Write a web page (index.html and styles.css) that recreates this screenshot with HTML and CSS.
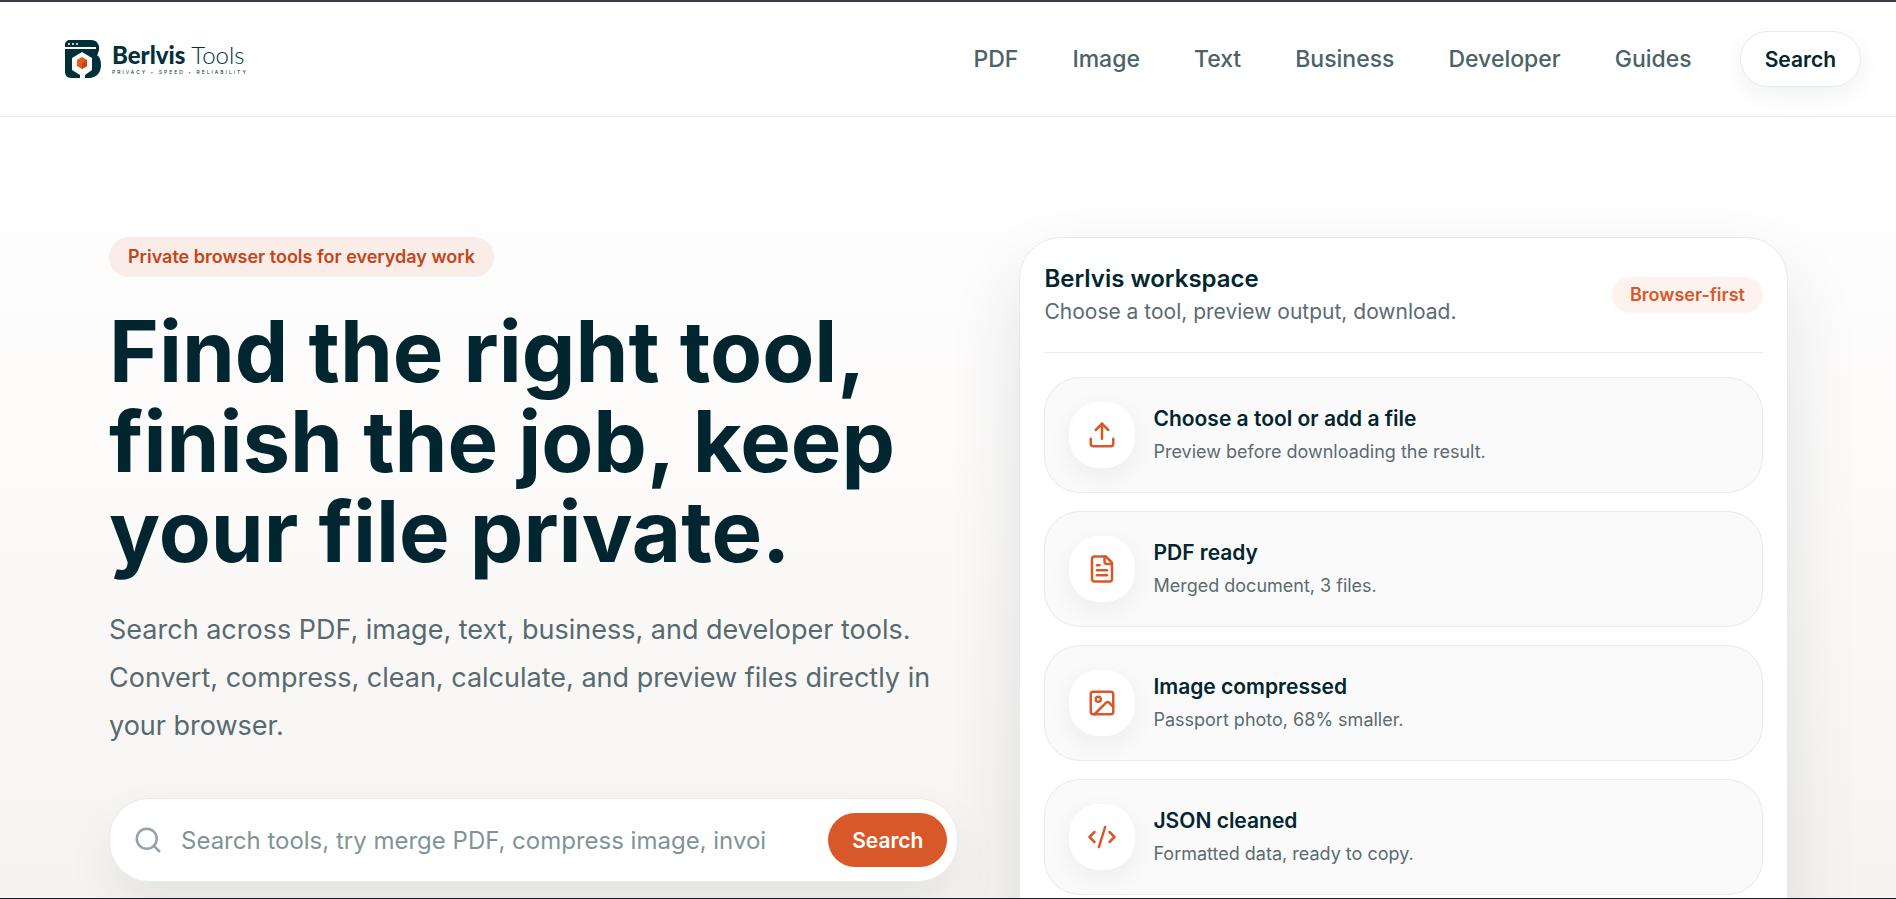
FILE: index.html
```html
<!DOCTYPE html>
<html lang="en">
<head>
    <meta charset="UTF-8">
    <meta name="viewport" content="width=device-width, initial-scale=1.0">
    <title>Berlvis Tools</title>
    <link rel="stylesheet" href="styles.css">
</head>
<body>
    <header class="site-header">
        <a class="logo" href="#" aria-label="Berlvis Tools">
            <svg class="logo-mark" viewBox="0 0 36 38" aria-hidden="true">
                <path fill="#02303a" d="M5 0h21c6 0 9 5 8 10-1 3-1 4-2 5 3 2 4 6 4 10 0 8-5 13-12 13h-4v-3l7-5V18L17 12 7 18v12l8 5v3H6c-4 0-6-3-6-6V5c0-3 2-5 5-5z"/>
                <path fill="#fff" d="M0 7h31v2H0z"/>
                <circle cx="4" cy="4" r="1" fill="#fff"/>
                <circle cx="8" cy="4" r="1" fill="#fff"/>
                <circle cx="12" cy="4" r="1" fill="#fff"/>
                <path fill="#e8591f" d="M17 17l5 3v6l-5 3-5-3v-6z"/>
                <path fill="#c8430f" d="M17 23l5-3v6l-5 3z"/>
            </svg>
            <span class="logo-text">
                <span class="logo-name"><b>Berlvis</b> Tools</span>
                <span class="logo-tagline">PRIVACY <i>•</i> SPEED <i>•</i> RELIABILITY</span>
            </span>
        </a>
        <nav class="nav">
            <a href="#">PDF</a>
            <a href="#">Image</a>
            <a href="#">Text</a>
            <a href="#">Business</a>
            <a href="#">Developer</a>
            <a href="#">Guides</a>
        </nav>
        <button class="nav-search" type="button">Search</button>
    </header>

    <main class="hero">
        <section class="intro">
            <span class="badge">Private browser tools for everyday work</span>
            <h1>Find the right tool, finish the job, keep your file private.</h1>
            <p class="lead">Search across PDF, image, text, business, and developer tools. Convert, compress, clean, calculate, and preview files directly in your browser.</p>
            <form class="search">
                <svg class="search-icon" viewBox="0 0 24 24" aria-hidden="true"><circle cx="11" cy="11" r="8"/><path d="m21 21-4.3-4.3"/></svg>
                <input type="search" aria-label="Search tools" placeholder="Search tools, try merge PDF, compress image, invoi">
                <button type="submit">Search</button>
            </form>
        </section>

        <section class="workspace">
            <div class="workspace-head">
                <div>
                    <h2>Berlvis workspace</h2>
                    <p>Choose a tool, preview output, download.</p>
                </div>
                <span class="tag">Browser-first</span>
            </div>
            <ul class="steps">
                <li class="step">
                    <span class="step-icon">
                        <svg viewBox="0 0 24 24" aria-hidden="true"><path d="M12 15V3"/><path d="m7 8 5-5 5 5"/><path d="M21 15v4a2 2 0 0 1-2 2H5a2 2 0 0 1-2-2v-4"/></svg>
                    </span>
                    <div>
                        <h3>Choose a tool or add a file</h3>
                        <p>Preview before downloading the result.</p>
                    </div>
                </li>
                <li class="step">
                    <span class="step-icon">
                        <svg viewBox="0 0 24 24" aria-hidden="true"><path d="M15 2H6a2 2 0 0 0-2 2v16a2 2 0 0 0 2 2h12a2 2 0 0 0 2-2V7Z"/><path d="M14 2v4a2 2 0 0 0 2 2h4"/><path d="M10 9H8"/><path d="M16 13H8"/><path d="M16 17H8"/></svg>
                    </span>
                    <div>
                        <h3>PDF ready</h3>
                        <p>Merged document, 3 files.</p>
                    </div>
                </li>
                <li class="step">
                    <span class="step-icon">
                        <svg viewBox="0 0 24 24" aria-hidden="true"><rect x="3" y="3" width="18" height="18" rx="2"/><circle cx="9" cy="9" r="2"/><path d="m21 15-3.1-3.1a2 2 0 0 0-2.8 0L6 21"/></svg>
                    </span>
                    <div>
                        <h3>Image compressed</h3>
                        <p>Passport photo, 68% smaller.</p>
                    </div>
                </li>
                <li class="step">
                    <span class="step-icon">
                        <svg viewBox="0 0 24 24" aria-hidden="true"><path d="m18 16 4-4-4-4"/><path d="m6 8-4 4 4 4"/><path d="m14.5 4-5 16"/></svg>
                    </span>
                    <div>
                        <h3>JSON cleaned</h3>
                        <p>Formatted data, ready to copy.</p>
                    </div>
                </li>
            </ul>
        </section>
    </main>
</body>
</html>
```
FILE: styles.css
```css
* {
    box-sizing: border-box;
}
body {
    margin: 0;
    height: 100vh;
    overflow: hidden;
    display: flex;
    flex-direction: column;
    border-top: 2px solid #3b3c47;
    border-bottom: 1px solid #1c1c1e;
    background-color: white;
    color: #02262f;
    font-family: Inter, "Liberation Sans", sans-serif;
}
h1, h2, h3, p, ul {
    margin: 0;
    padding: 0;
}
button, input {
    font-family: inherit;
}

/* Header */
.site-header {
    flex: none;
    display: flex;
    align-items: center;
    gap: 48px;
    height: 115px;
    padding: 0 35px 0 65px;
    border-bottom: 1px solid #e6ecec;
    background-color: white;
}
.logo {
    display: flex;
    align-items: center;
    gap: 11px;
    margin-right: auto;
    color: #02303a;
    text-decoration: none;
}
.logo-mark {
    width: 36px;
    height: 38px;
}
.logo-text {
    display: flex;
    flex-direction: column;
    gap: 2px;
}
.logo-name {
    font-family: Lato, sans-serif;
    font-size: 24px;
    font-weight: 300;
    line-height: 24px;
}
.logo-name b {
    font-weight: 900;
}
.logo-tagline {
    font-size: 5px;
    line-height: 6px;
    letter-spacing: 2px;
}
.logo-tagline i {
    color: #e0521e;
}
.nav {
    display: flex;
    align-items: center;
    gap: 54px;
}
.nav a {
    color: #4b6268;
    font-size: 23px;
    font-weight: 500;
    text-decoration: none;
}
.nav-search {
    height: 56px;
    padding: 0 24px;
    border: 1px solid #e6ecec;
    border-radius: 28px;
    background-color: white;
    box-shadow: 0 8px 24px rgba(2, 38, 47, 0.06);
    color: #02262f;
    font-size: 21px;
    font-weight: 600;
}

/* Hero */
.hero {
    flex: 1;
    min-height: 0;
    display: grid;
    grid-template-columns: 1.05fr 0.95fr;
    align-items: start;
    gap: 61px;
    padding: 120px 108px 0 109px;
    background: linear-gradient(#ffffff, #fbf9f8 60%, #f6f4f2);
}
.badge {
    display: inline-block;
    padding: 0 19px;
    border-radius: 20px;
    background-color: #faece7;
    color: #c2461a;
    font-size: 18px;
    font-weight: 600;
    line-height: 40px;
}
h1 {
    margin-top: 30px;
    font-size: 85px;
    font-weight: 700;
    line-height: 90px;
}
.lead {
    margin-top: 29px;
    color: #566a70;
    font-size: 27px;
    line-height: 48px;
}
.search {
    display: flex;
    align-items: center;
    gap: 18px;
    height: 84px;
    margin-top: 48px;
    padding: 0 10px 0 23px;
    border: 1px solid #e6ecec;
    border-radius: 40px;
    background-color: white;
    box-shadow: 0 24px 48px rgba(2, 38, 47, 0.08);
}
.search-icon {
    flex: none;
    width: 30px;
    height: 30px;
    fill: none;
    stroke: #93a4a8;
    stroke-width: 2;
    stroke-linecap: round;
}
.search input {
    flex: 1;
    min-width: 0;
    padding: 0;
    border: 0;
    outline: 0;
    background: none;
    font-size: 24px;
}
.search input::placeholder {
    color: #7f9498;
}
.search button {
    height: 54px;
    padding: 0 24px;
    border: 0;
    border-radius: 27px;
    background-color: #d9582a;
    color: white;
    font-size: 21px;
    font-weight: 600;
}

/* Workspace card */
.workspace {
    padding: 24px 24px 48px;
    border: 1px solid #e6ecec;
    border-radius: 42px;
    background-color: white;
    box-shadow: 0 36px 72px rgba(2, 38, 47, 0.12);
}
.workspace-head {
    display: flex;
    align-items: center;
    justify-content: space-between;
    padding-bottom: 24px;
    border-bottom: 1px solid #e6ecec;
}
.workspace-head h2 {
    font-size: 24px;
    font-weight: 600;
    line-height: 34px;
}
.workspace-head p {
    color: #5b6b71;
    font-size: 21px;
    line-height: 32px;
}
.tag {
    padding: 0 18px;
    border-radius: 18px;
    background-color: #fdf2ee;
    color: #d9582a;
    font-size: 18px;
    font-weight: 600;
    line-height: 36px;
}
.steps {
    display: grid;
    gap: 18px;
    margin-top: 24px;
    list-style: none;
}
.step {
    display: flex;
    align-items: center;
    gap: 18px;
    padding: 24px;
    border: 1px solid #e8eaea;
    border-radius: 36px;
    background-color: #fafafa;
}
.step-icon {
    display: flex;
    align-items: center;
    justify-content: center;
    width: 66px;
    height: 66px;
    border-radius: 30px;
    background-color: white;
    box-shadow: 0 8px 24px rgba(2, 38, 47, 0.06);
}
.step-icon svg {
    width: 30px;
    height: 30px;
    fill: none;
    stroke: #d9582a;
    stroke-width: 2;
    stroke-linecap: round;
    stroke-linejoin: round;
}
.step h3 {
    font-size: 21px;
    font-weight: 600;
    line-height: 34px;
}
.step p {
    color: #5b6b71;
    font-size: 18px;
    line-height: 32px;
}
```
